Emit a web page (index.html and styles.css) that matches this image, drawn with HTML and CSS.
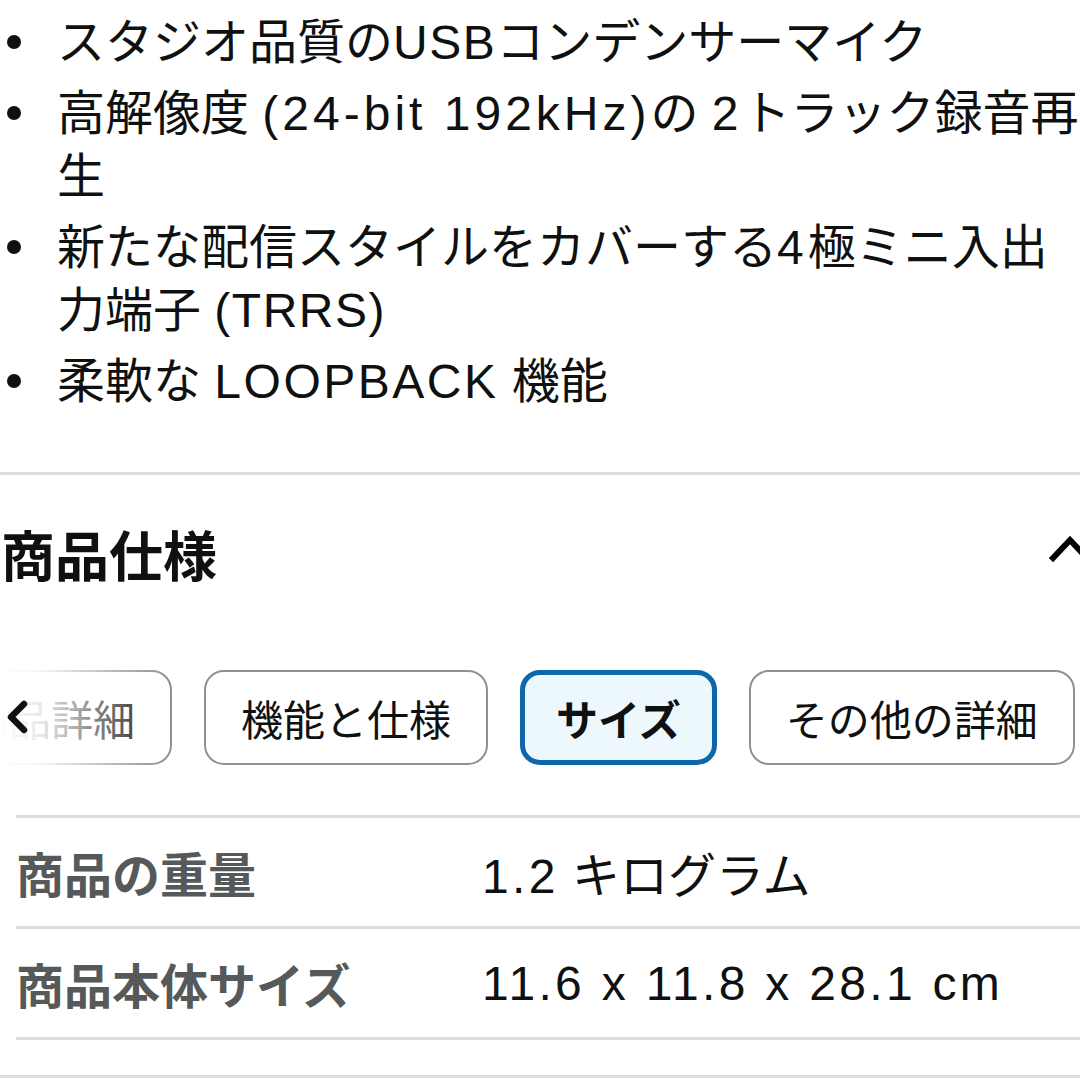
FILE: index.html
```html
<!DOCTYPE html>
<html lang="ja">
<head>
<meta charset="utf-8">
<title>商品仕様</title>
<link rel="stylesheet" href="styles.css">
</head>
<body>
<div class="page">
  <ul class="features">
    <li>スタジオ品質の<span class="lat caps">USB</span>コンデンサーマイク</li>
    <li>高解像度 <span class="lat">(24-bit 192kHz)</span>の <span class="lat">2</span>トラック録音再生</li>
    <li>新たな配信スタイルをカバーする<span class="lat">4</span>極ミニ入出力端子 <span class="lat caps">(TRRS)</span></li>
    <li>柔軟な <span class="lat caps-wide">LOOPBACK</span> 機能</li>
  </ul>

  <hr class="divider">

  <div class="spec-header">
    <h2 class="spec-title">商品仕様</h2>
    <svg class="collapse-icon" width="44" height="32" viewBox="0 0 44 32" aria-hidden="true">
      <polyline points="4,27 21,9 38,27" fill="none" stroke="#000" stroke-width="6" stroke-linecap="square"/>
    </svg>
  </div>

  <div class="tabs-wrap">
    <div class="tabs">
      <div class="tab">商品詳細</div>
      <div class="tab">機能と仕様</div>
      <div class="tab tab-active">サイズ</div>
      <div class="tab">その他の詳細</div>
    </div>
    <div class="tabs-fade"></div>
    <svg class="tabs-prev" width="24" height="34" viewBox="0 0 24 34" aria-hidden="true">
      <polyline points="19,4 6,17 19,30" fill="none" stroke="#0f1111" stroke-width="6.5" stroke-linecap="round" stroke-linejoin="round"/>
    </svg>
  </div>

  <div class="spec-table">
    <div class="spec-row">
      <div class="spec-label">商品の重量</div>
      <div class="spec-value"><span class="val-num">1.2</span> キログラム</div>
    </div>
    <div class="spec-row">
      <div class="spec-label">商品本体サイズ</div>
      <div class="spec-value"><span class="val-num">11.6 x 11.8 x 28.1 cm</span></div>
    </div>
  </div>

  <hr class="divider bottom-divider">
</div>
</body>
</html>
```

FILE: styles.css
```css
html, body {
  margin: 0;
  padding: 0;
  background: #ffffff;
}

body {
  width: 1080px;
  height: 1080px;
  overflow: hidden;
  font-family: "Liberation Sans", "Noto Sans CJK JP", sans-serif;
  color: #0f1111;
}

.page {
  display: flex;
  flex-direction: column;
}

.lat {
  letter-spacing: 4px;
}

.lat.caps {
  letter-spacing: 1.5px;
}

.lat.caps-wide {
  letter-spacing: 2.5px;
}

.val-num {
  letter-spacing: 3.3px;
}

.features {
  list-style: none;
  margin: 0;
  padding: 11px 0 0 0;
}

.features li {
  position: relative;
  padding-left: 57px;
  font-size: 48px;
  line-height: 63px;
  margin-bottom: 8px;
}

.features li:last-child {
  margin-bottom: 0;
}

.features li::before {
  content: "";
  position: absolute;
  left: 7px;
  top: 24px;
  width: 14px;
  height: 14px;
  border-radius: 50%;
  background: #0f1111;
}

.divider {
  border: 0;
  height: 3px;
  background: #dcdfe0;
  margin: 59px 0 0 0;
  width: 100%;
}

.spec-header {
  display: flex;
  align-items: center;
  justify-content: space-between;
  padding-top: 48px;
  height: 70px;
}

.spec-title {
  margin: 0 0 0 1px;
  font-size: 54px;
  line-height: 70px;
  font-weight: 700;
  color: #0f1111;
}

.collapse-icon {
  margin-right: -13px;
  margin-top: -22px;
}

.tabs-wrap {
  position: relative;
  margin-top: 77px;
  height: 95px;
}

.tabs {
  display: flex;
  gap: 32px;
  margin-left: -70px;
}

.tab {
  flex-shrink: 0;
  box-sizing: border-box;
  height: 95px;
  display: flex;
  align-items: center;
  padding: 0 35px;
  border: 2px solid #8d9096;
  border-radius: 20px;
  background: #ffffff;
  font-size: 42px;
  color: #0f1111;
  white-space: nowrap;
}

.tab-active {
  border: 5px solid #0e67aa;
  background: #edf8fd;
  padding: 0 31px;
  font-weight: 700;
}

.tabs-fade {
  position: absolute;
  left: 0;
  top: 0;
  width: 170px;
  height: 95px;
  background: linear-gradient(to right, #ffffff 0%, rgba(255,255,255,0.9) 25%, rgba(255,255,255,0.45) 60%, rgba(255,255,255,0) 100%);
}

.tabs-prev {
  position: absolute;
  left: 5px;
  top: 30px;
}

.spec-table {
  margin-top: 50px;
  margin-left: 16px;
  border-top: 3px solid #dcdfe0;
}

.spec-row {
  display: flex;
  align-items: center;
  height: 108px;
  border-bottom: 3px solid #dcdfe0;
  font-size: 48px;
}

.spec-label {
  width: 466px;
  flex-shrink: 0;
  font-weight: 700;
  color: #565959;
}

.spec-value {
  color: #0f1111;
}

.bottom-divider {
  margin-top: 35px;
}
```
